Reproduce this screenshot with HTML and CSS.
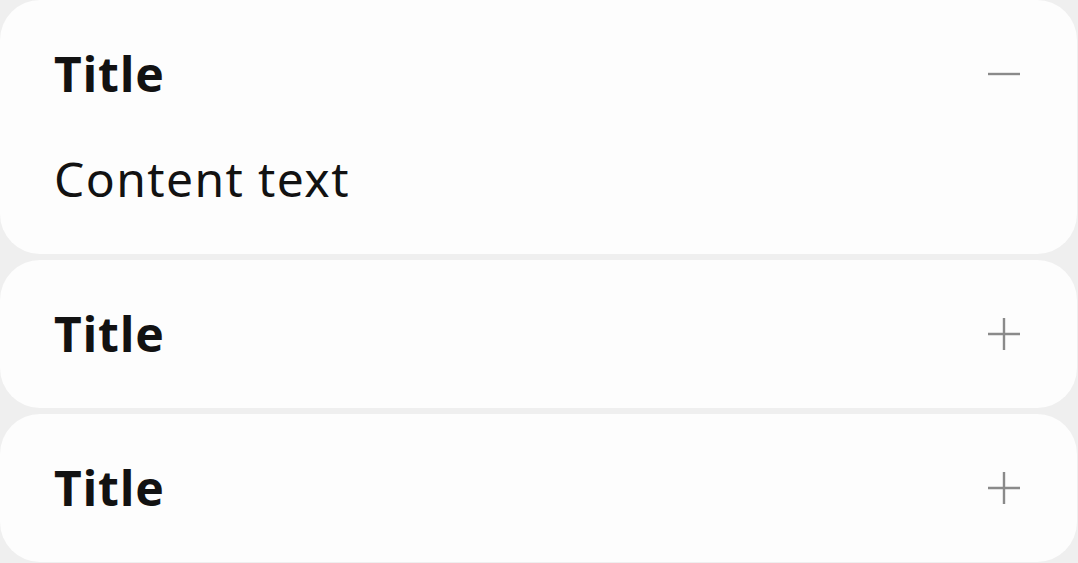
FILE: index.html
```
<!DOCTYPE html>
<html>
<head>
<meta charset="utf-8">
<link rel="stylesheet" href="styles.css">
</head>
<body>
<div class="accordion">
  <section class="item open">
    <div class="header">
      <h2 class="title">Title</h2>
      <svg class="icon" width="32" height="32" viewBox="0 0 32 32"><path d="M0 16H32" stroke="#8a8a8a" stroke-width="2.4"/></svg>
    </div>
    <div class="content">Content text</div>
  </section>
  <section class="item">
    <div class="header">
      <h2 class="title">Title</h2>
      <svg class="icon" width="32" height="32" viewBox="0 0 32 32"><path d="M0 16H32M16 0V32" stroke="#8a8a8a" stroke-width="2.4"/></svg>
    </div>
  </section>
  <section class="item">
    <div class="header">
      <h2 class="title">Title</h2>
      <svg class="icon" width="32" height="32" viewBox="0 0 32 32"><path d="M0 16H32M16 0V32" stroke="#8a8a8a" stroke-width="2.4"/></svg>
    </div>
  </section>
</div>
</body>
</html>
```

FILE: styles.css
```
html, body {
  margin: 0;
  padding: 0;
  background: #efefef;
}
body {
  font-family: "Noto Sans", sans-serif;
  color: #121212;
}
.accordion {
  display: flex;
  flex-direction: column;
  gap: 6px;
  margin-right: 1px;
}
.item {
  background: #fdfdfd;
  border-radius: 40px;
}
.header {
  height: 148px;
  display: flex;
  align-items: center;
  justify-content: space-between;
  padding: 0 57px 0 54px;
}
.title {
  margin: 0;
  font-size: 48px;
  font-weight: 700;
  letter-spacing: 1px;
  line-height: 1;
}
.icon {
  display: block;
}
.content {
  font-size: 48px;
  letter-spacing: 1.4px;
  line-height: 1;
  padding: 0 54px;
  margin-top: 7px;
  height: 99px;
}
```
